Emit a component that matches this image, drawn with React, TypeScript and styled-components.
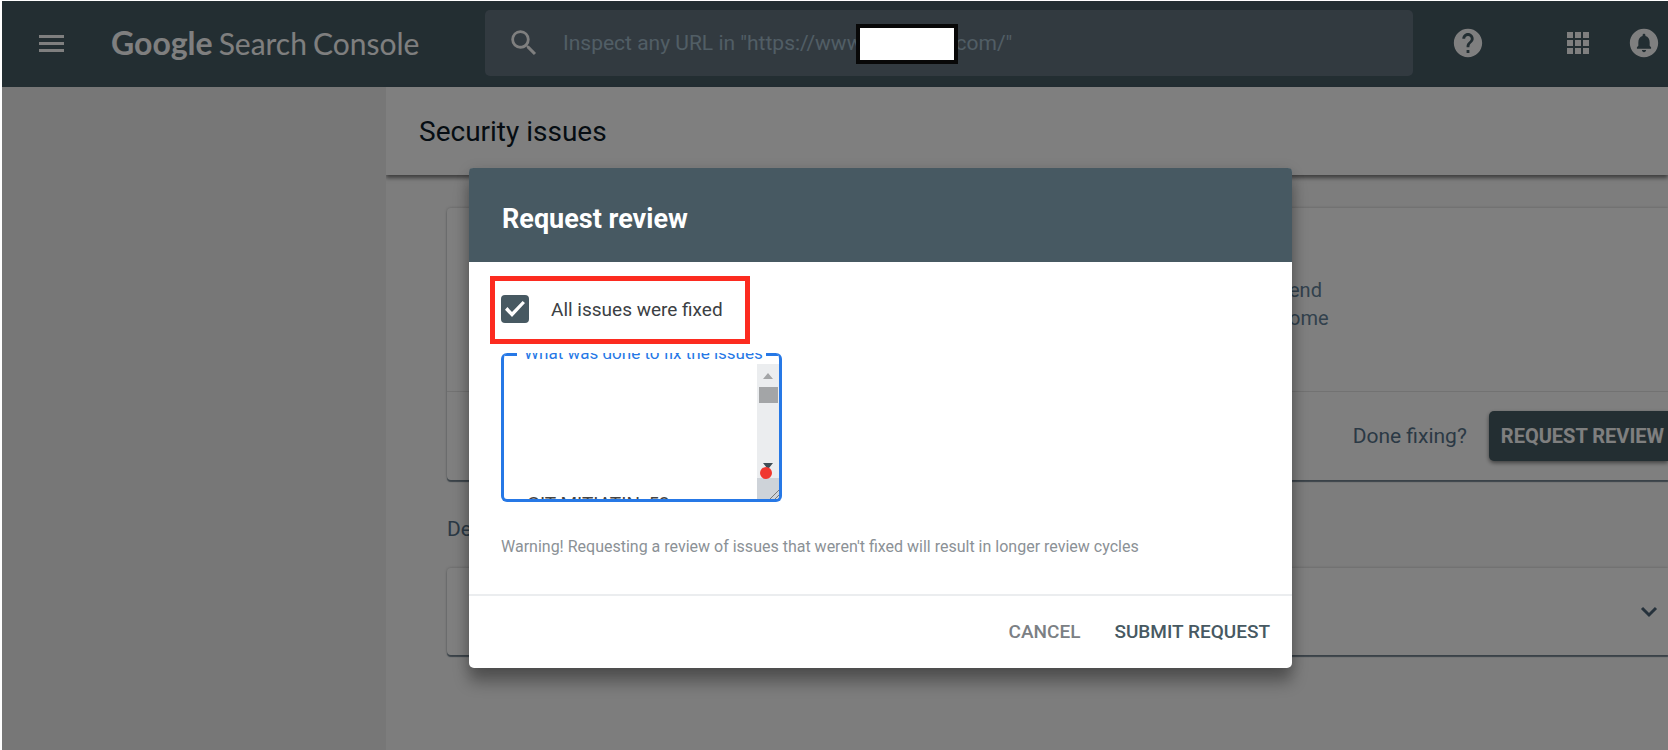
import React from 'react';
import styled, { createGlobalStyle, css } from 'styled-components';

const GlobalStyle = createGlobalStyle`
  *, *::before, *::after { box-sizing: border-box; }
  body { margin: 0; background: #fff; overflow: hidden; }
  body, button, input, textarea { font-family: Roboto, 'Liberation Sans', sans-serif; }
  h1, h2, p { margin: 0; font-weight: 400; }
  button { border: 0; background: none; padding: 0; cursor: pointer; }
`;

const Page = styled.div`
  position: relative;
  display: flex;
  flex-direction: column;
  min-height: 100vh;
  padding: 1px 0 0 2px;
  overflow: hidden;
`;

const Header = styled.header`
  display: flex;
  align-items: center;
  height: 86px;
  padding: 0 7px 2px 32px;
  background: #465c65;
  color: #fff;
`;

const IconButton = styled.button<{ $gap?: number }>`
  display: flex;
  flex: none;
  color: inherit;
  margin-left: ${(p) => p.$gap ?? 0}px;
`;

const Logo = styled.a`
  display: flex;
  flex: none;
  align-items: baseline;
  gap: 6px;
  width: 415px;
  padding-left: 41px;
  color: #fff;
  text-decoration: none;
  font: 400 30px/40px Lato, 'Open Sans', sans-serif;
  white-space: nowrap;
`;

const LogoStrong = styled.span`
  font-size: 32px;
  font-weight: 700;
`;

const SearchBox = styled.label`
  display: flex;
  flex: 1;
  align-items: center;
  height: 66px;
  padding-left: 22px;
  gap: 22px;
  border-radius: 5px;
  background: #657481;
`;

const SearchInput = styled.input`
  flex: 1;
  min-width: 0;
  padding: 0;
  border: 0;
  outline: 0;
  background: none;
  color: #fff;
  font-size: 21px;
  line-height: 28px;
  &::placeholder { color: #a3bccb; opacity: 1; }
`;

const Body = styled.div`
  display: flex;
  flex: 1;
`;

const Sidebar = styled.nav`
  position: relative;
  z-index: 1;
  flex: none;
  width: 384px;
  background: #eee;
`;

const Main = styled.main`
  flex: 1;
  min-width: 0;
  background: #fafafa;
`;

const TitleBar = styled.div`
  display: flex;
  align-items: center;
  height: 88px;
  padding: 2px 0 0 33px;
  background: #fff;
  box-shadow: 0 3px 4px rgba(0, 0, 0, 0.5);
`;

const PageTitle = styled.h1`
  color: #0d1a26;
  font-size: 28px;
  line-height: 32px;
`;

const Content = styled.div`
  padding: 33px 0 0 61px;
`;

const Card = styled.section`
  border-radius: 4px 0 0 4px;
  background: #fff;
  box-shadow: 0 2px 1px rgba(70, 92, 110, 0.7), 0 0 3px rgba(0, 0, 0, 0.25);
`;

const Summary = styled.p`
  height: 184px;
  padding: 68px 0 0 842px;
  border-bottom: 1px solid #e4e4e4;
  color: #64839a;
  font-size: 20px;
  line-height: 28px;
`;

const CardActions = styled.div`
  display: flex;
  align-items: center;
  justify-content: flex-end;
  gap: 22px;
  height: 88px;
  color: #56738a;
  font-size: 21px;
`;

const ReviewButton = styled.button`
  height: 50px;
  padding: 0 4px 0 12px;
  border-radius: 5px 0 0 5px;
  background: #465c65;
  box-shadow: 0 2px 4px rgba(0, 0, 0, 0.5);
  color: #fff;
  font-size: 20px;
  font-weight: 700;
  white-space: nowrap;
`;

const SectionTitle = styled.h2`
  margin: 35px 0 25px;
  color: #56738a;
  font-size: 21px;
  line-height: 28px;
`;

const IssueRow = styled(Card)`
  display: flex;
  align-items: center;
  justify-content: flex-end;
  height: 87px;
  padding-right: 2px;
  color: #4c6478;
`;

const Scrim = styled.div`
  position: absolute;
  z-index: 2;
  inset: 1px 0 0 2px;
  background: rgba(0, 0, 0, 0.5);
`;

const Redaction = styled.span`
  position: absolute;
  z-index: 3;
  top: 24px;
  left: 856px;
  width: 102px;
  height: 40px;
  border: 4px solid #080808;
  background: #fff;
`;

const DialogLayer = styled.div`
  position: absolute;
  z-index: 3;
  inset: 168px 0 auto 93px;
  display: flex;
  justify-content: center;
`;

const Dialog = styled.form`
  width: 823px;
  border-radius: 5px;
  background: #fff;
  box-shadow: 0 14px 16px rgba(0, 0, 0, 0.32), 0 2px 14px rgba(0, 0, 0, 0.14);
`;

const DialogHeader = styled.header`
  display: flex;
  align-items: center;
  height: 94px;
  padding: 8px 33px 0;
  border-radius: 4px 4px 0 0;
  background: #475962;
`;

const DialogTitle = styled.h2`
  color: #fff;
  font-size: 27px;
  font-weight: 700;
  line-height: 32px;
`;

const DialogBody = styled.div`
  display: flex;
  flex-direction: column;
  align-items: flex-start;
  height: 332px;
  padding: 14px 33px 0 21px;
`;

const FixedOption = styled.label`
  display: flex;
  align-items: center;
  gap: 22px;
  width: 260px;
  height: 68px;
  padding: 0 0 2px 6px;
  border: 5px solid #fc2b20;
  color: #3b4043;
  font-size: 19px;
  white-space: nowrap;
`;

const Checkbox = styled.input`
  display: grid;
  flex: none;
  place-items: center;
  width: 28px;
  height: 28px;
  margin: 0;
  border-radius: 4px;
  appearance: none;
  background: #475962;
  &:checked::before {
    content: '';
    width: 20px;
    height: 16px;
    background: #fff;
    clip-path: polygon(0 54%, 12% 38%, 35% 68%, 88% 0, 100% 12%, 35% 100%);
  }
`;

const Field = styled.div`
  position: relative;
  display: flex;
  width: 281px;
  height: 149px;
  margin: 9px 0 0 11px;
  padding: 11px 0 0 3px;
  border: 3px solid #2678e6;
  border-width: 0 3px 3px;
  border-radius: 6px;
  overflow: hidden;
`;

const FieldEdge = styled.span<{ $side: 'left' | 'right' }>`
  position: absolute;
  top: 0;
  width: 13px;
  height: 3px;
  background: #2678e6;
  ${(p) => (p.$side === 'left' ? css`left: 0;` : css`right: 0;`)}
`;

const FieldLabel = styled.label`
  position: absolute;
  top: -10px;
  left: 20px;
  color: #2678e6;
  font-size: 17px;
  line-height: 20px;
  white-space: nowrap;
`;

const FieldText = styled.textarea`
  flex: 1;
  min-width: 0;
  padding: 126px 0 0 20px;
  border: 0;
  outline: 0;
  resize: none;
  overflow: hidden;
  background: none;
  color: #444;
  font-size: 19px;
  line-height: 28px;
`;

const Scrollbar = styled.svg`
  flex: none;
  width: 22px;
  height: 136px;
`;

const Warning = styled.p`
  margin: 33px 0 0 11px;
  color: #8b9196;
  font-size: 16px;
  line-height: 24px;
  white-space: nowrap;
`;

const DialogFooter = styled.footer`
  display: flex;
  align-items: center;
  justify-content: flex-end;
  gap: 34px;
  height: 74px;
  padding-right: 22px;
  border-top: 2px solid #ebedef;
`;

const TextButton = styled.button<{ $primary?: boolean }>`
  color: ${(p) => (p.$primary ? '#475962' : '#7b8084')};
  font-size: 19px;
  font-weight: 500;
  line-height: 28px;
`;

const MenuIcon = () => (
  <svg width="36" height="36" viewBox="0 0 36 36" fill="currentColor" aria-hidden="true">
    <path d="M5 10h25v3H5zM5 17h25v3H5zM5 24h25v3H5z" />
  </svg>
);

const SearchIcon = () => (
  <svg width="34" height="34" viewBox="0 0 24 24" fill="currentColor" aria-hidden="true">
    <path d="M15.5 14h-.79l-.28-.27A6.471 6.471 0 0 0 16 9.5 6.5 6.5 0 1 0 9.5 16c1.61 0 3.09-.59 4.23-1.57l.27.28v.79l5 4.99L20.49 19l-4.99-5zm-6 0C7.01 14 5 11.99 5 9.5S7.01 5 9.5 5 14 7.01 14 9.5 11.99 14 9.5 14z" />
  </svg>
);

const HelpIcon = () => (
  <svg width="34" height="34" viewBox="0 0 24 24" fill="currentColor" aria-hidden="true">
    <path d="M12 2C6.48 2 2 6.48 2 12s4.480 10 10 10 10-4.480 10-10S17.520 2 12 2zm1 17h-2v-2h2v2zm2.070-7.750l-.9.920C13.450 12.900 13 13.500 13 15h-2v-.5c0-1.100.45-2.100 1.170-2.830l1.240-1.260c.37-.36.59-.86.59-1.410 0-1.100-.9-2-2-2s-2 .9-2 2H8c0-2.210 1.790-4 4-4s4 1.790 4 4c0 .88-.36 1.680-.93 2.250z" />
  </svg>
);

const AppsIcon = () => (
  <svg width="34" height="34" viewBox="0 0 34 34" fill="currentColor" aria-hidden="true">
    {[6, 14, 22].map((y) =>
      [6, 14, 22].map((x) => <rect key={`${x}-${y}`} x={x} y={y} width="6" height="6" />),
    )}
  </svg>
);

const BellIcon = () => (
  <svg width="34" height="34" viewBox="0 0 24 24" fill="currentColor" aria-hidden="true">
    <path d="M12 2C6.48 2 2 6.48 2 12s4.480 10 10 10 10-4.480 10-10S17.520 2 12 2zm0 16.500c-.83 0-1.500-.67-1.500-1.500h3c0 .83-.67 1.500-1.500 1.500zm5-2.500H7v-1l1-1v-2.610C8 9.270 9.030 7.470 11 7v-.5c0-.57.43-1 1-1s1 .43 1 1V7c1.970.47 3 2.280 3 4.390V14l1 1v1z" />
  </svg>
);

const ChevronIcon = () => (
  <svg width="34" height="34" viewBox="0 0 34 34" fill="none" stroke="currentColor" strokeWidth="3" aria-hidden="true">
    <path d="M10 13l7 7 7-7" />
  </svg>
);

export default function App() {
  return (
    <>
      <GlobalStyle />
      <Page>
        <Header>
          <IconButton type="button" aria-label="Main menu"><MenuIcon /></IconButton>
          <Logo href="#">
            <LogoStrong>Google</LogoStrong>
            <span>Search</span>
            <span>Console</span>
          </Logo>
          <SearchBox>
            <SearchIcon />
            <SearchInput type="search" aria-label="Inspect URL" placeholder={'Inspect any URL in "https://www.                .com/"'} />
          </SearchBox>
          <IconButton $gap={38} type="button" aria-label="Help"><HelpIcon /></IconButton>
          <IconButton $gap={76} type="button" aria-label="Apps"><AppsIcon /></IconButton>
          <IconButton $gap={32} type="button" aria-label="Notifications"><BellIcon /></IconButton>
        </Header>
        <Body>
          <Sidebar />
          <Main>
            <TitleBar><PageTitle>Security issues</PageTitle></TitleBar>
            <Content>
              <Card>
                <Summary>end<br />ome</Summary>
                <CardActions>
                  <span>Done fixing?</span>
                  <ReviewButton type="button">REQUEST REVIEW</ReviewButton>
                </CardActions>
              </Card>
              <SectionTitle>De</SectionTitle>
              <IssueRow>
                <IconButton type="button" aria-label="Expand"><ChevronIcon /></IconButton>
              </IssueRow>
            </Content>
          </Main>
        </Body>
        <Scrim />
        <Redaction />
        <DialogLayer>
          <Dialog role="dialog" aria-labelledby="dialog-title" onSubmit={(e) => e.preventDefault()}>
            <DialogHeader><DialogTitle id="dialog-title">Request review</DialogTitle></DialogHeader>
            <DialogBody>
              <FixedOption>
                <Checkbox type="checkbox" defaultChecked />
                All issues were fixed
              </FixedOption>
              <Field>
                <FieldEdge $side="left" />
                <FieldLabel htmlFor="fix-notes">What was done to fix the issues</FieldLabel>
                <FieldEdge $side="right" />
                <FieldText id="fix-notes" defaultValue="GIT MITIATIN, 53" />
                <Scrollbar viewBox="0 0 22 136" aria-hidden="true">
                  <path fill="#ebedef" d="M0 0h22v114H0z" />
                  <path fill="#a3a5a7" d="M6 15l5-6 5 6zM2 23h19v16H2z" />
                  <path fill="#ced3d9" d="M0 114h22v22H0z" />
                  <path fill="#3f4d55" d="M6 99h10l-4 5v3h-2v-3z" />
                  <circle cx="9" cy="109" r="6" fill="#f0372f" />
                  <path stroke="#777" d="M12 136l10-10M17 136l5-5" />
                </Scrollbar>
              </Field>
              <Warning>Warning! Requesting a review of issues that weren't fixed will result in longer review cycles</Warning>
            </DialogBody>
            <DialogFooter>
              <TextButton type="button">CANCEL</TextButton>
              <TextButton $primary type="submit">SUBMIT REQUEST</TextButton>
            </DialogFooter>
          </Dialog>
        </DialogLayer>
      </Page>
    </>
  );
}
